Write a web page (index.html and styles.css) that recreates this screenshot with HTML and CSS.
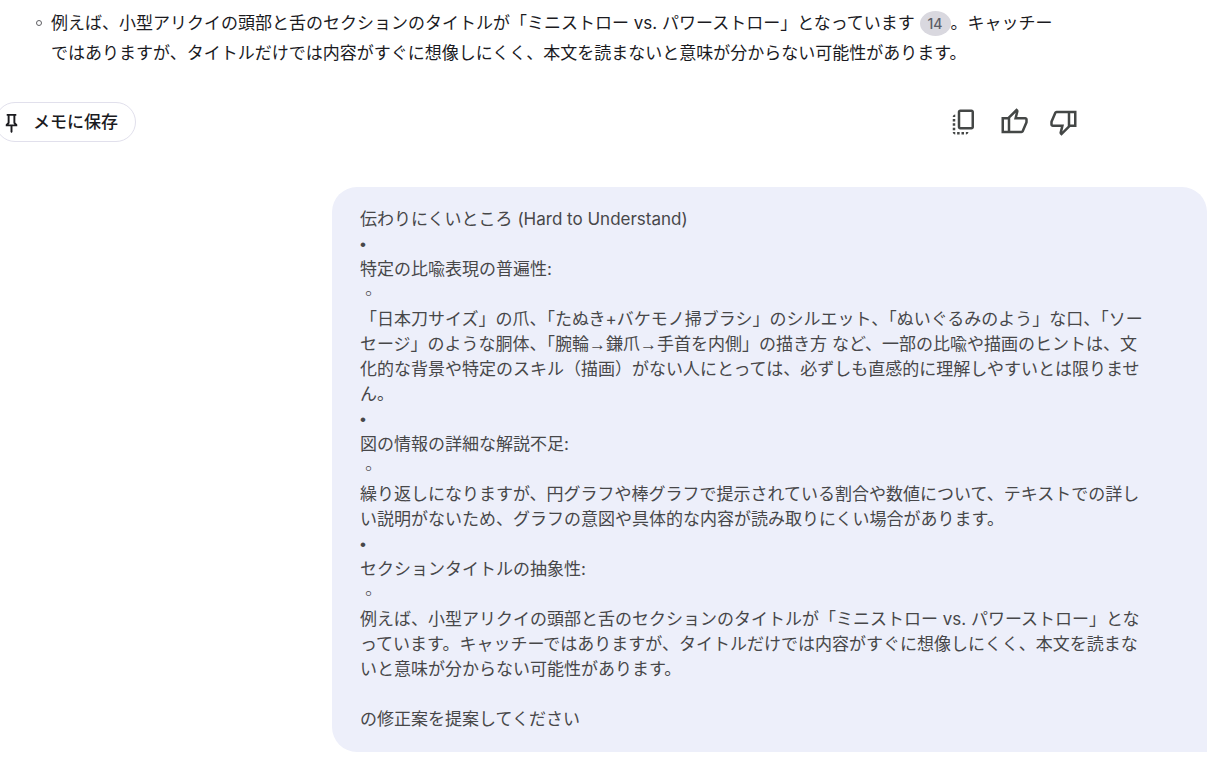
FILE: index.html
```html
<!DOCTYPE html>
<html lang="ja">

<head>
  <meta charset="utf-8">
  <meta name="viewport" content="width=device-width, initial-scale=1">
  <title>チャット</title>
  <link rel="stylesheet" href="styles.css">
</head>

<body>
  <main class="chat">
    <section class="reply">
      <ul class="reply-list">
        <li>例えば、小型アリクイの頭部と舌のセクションのタイトルが「ミニストロー vs. パワーストロー」となっています <button class="citation" type="button">14</button>。キャッチー<br>ではありますが、タイトルだけでは内容がすぐに想像しにくく、本文を読まないと意味が分からない可能性があります。</li>
      </ul>

      <div class="actions">
        <button class="save" type="button">
          <svg class="pin" viewBox="0 -960 960 960" aria-hidden="true"><path d="m640-480 80 80v80H520v240l-40 40-40-40v-240H240v-80l80-80v-280h-40v-80h400v80h-40v280Zm-286 80h252l-46-46v-314H400v314l-46 46Z"/></svg>
          <span class="save-label">メモに保存</span>
        </button>

        <div class="feedback">
          <button class="icon-button" type="button" aria-label="コピー">
            <svg viewBox="0 0 24 24"><path d="M18 2H9c-1.1 0-2 .9-2 2v12c0 1.1.9 2 2 2h9c1.1 0 2-.9 2-2V4c0-1.1-.9-2-2-2zm0 14H9V4h9v12zM3 15v-2h2v2H3zm0-5.500h2v2H3v-2zM10 20h2v2h-2v-2zm-7-1.500v-2h2v2H3zM5 22c-1.100 0-2-.9-2-2h2v2zm3.500 0h-2v-2h2v2zm5 0v-2h2c0 1.100-.9 2-2 2zM5 6v2H3c0-1.100.9-2 2-2z"/></svg>
          </button>
          <button class="icon-button" type="button" aria-label="良い回答">
            <svg viewBox="0 -960 960 960"><path d="M720-120H280v-520l280-280 50 50q7 7 11.500 19t4.500 23v14l-44 174h258q32 0 56 24t24 56v80q0 7-2 15t-4 15L794-168q-9 20-30 34t-44 14Zm-360-80h360l120-280v-80H480l54-220-174 174v406ZM280-640v80H160v360h120v80H80v-520h200Z"/></svg>
          </button>
          <button class="icon-button" type="button" aria-label="悪い回答">
            <svg viewBox="0 -960 960 960"><path d="M240-840h440v520L400-40l-50-50q-7-7-11.500-19t-4.500-23v-14l44-174H120q-32 0-56-24t-24-56v-80q0-7 2-15t4-15l120-282q9-20 30-34t44-14Zm360 80H240L120-480v80h360l-54 220 174-174v-406ZM680-320v-80h120v-360H680v-80h200v520H680Z"/></svg>
          </button>
        </div>
      </div>
    </section>

    <section class="message">
      <p>伝わりにくいところ (Hard to Understand)</p>
      <p><span class="symbol">•</span></p>
      <p>特定の比喩表現の普遍性:</p>
      <p><span class="circle">◦</span></p>
      <p>「日本刀サイズ」の爪、「たぬき+バケモノ掃ブラシ」のシルエット、「ぬいぐるみのよう」な口、「ソー<br>セージ」のような胴体、「腕輪<span class="symbol">→</span>鎌爪<span class="symbol">→</span>手首を内側」の描き方 など、一部の比喩や描画のヒントは、文<br>化的な背景や特定のスキル（描画）がない人にとっては、必ずしも直感的に理解しやすいとは限りませ<br>ん。</p>
      <p><span class="symbol">•</span></p>
      <p>図の情報の詳細な解説不足:</p>
      <p><span class="circle">◦</span></p>
      <p>繰り返しになりますが、円グラフや棒グラフで提示されている割合や数値について、テキストでの詳し<br>い説明がないため、グラフの意図や具体的な内容が読み取りにくい場合があります。</p>
      <p><span class="symbol">•</span></p>
      <p>セクションタイトルの抽象性:</p>
      <p><span class="circle">◦</span></p>
      <p>例えば、小型アリクイの頭部と舌のセクションのタイトルが「ミニストロー vs. パワーストロー」とな<br>っています。キャッチーではありますが、タイトルだけでは内容がすぐに想像しにくく、本文を読まな<br>いと意味が分からない可能性があります。</p>
      <p class="request">の修正案を提案してください</p>
    </section>
  </main>
</body>

</html>
```

FILE: styles.css
```css
body {
  margin: 0;
  background: #fff;
  color: #1b1b1f;
  font-family: Inter, "Noto Sans CJK JP", sans-serif;
  font-size: 17px;
  overflow-x: hidden;
}

button {
  border: 0;
  background: none;
  color: inherit;
  font-family: inherit;
  cursor: pointer;
}

.chat {
  padding: 8px 7px 32px 0;
}

.reply {
  margin-right: 128px;
}

.reply-list {
  margin: 0;
  padding-left: 51px;
  line-height: 30px;
  list-style: none;
}

.reply-list li {
  position: relative;
}

/* small hollow bullet hanging left of the text */
.reply-list li::before {
  content: "";
  position: absolute;
  top: 12px;
  left: -15px;
  width: 4px;
  height: 4px;
  border: 1px solid #5f5f64;
  border-radius: 50%;
}

.citation {
  width: 31px;
  height: 25px;
  padding: 0;
  border-radius: 50%;
  background: #d9d8df;
  color: #5d5e67;
  font-size: 14px;
  font-weight: 500;
  line-height: 25px;
}

.actions {
  display: flex;
  justify-content: space-between;
  align-items: center;
  margin-top: 34px;
}

.save {
  display: flex;
  align-items: center;
  gap: 10px;
  height: 40px;
  margin-left: -5px;
  padding: 0 17px 0 4px;
  border: 1px solid #e1e0ec;
  border-radius: 20px;
  font-size: 17px;
  font-weight: 500;
}

.save-label {
  padding-bottom: 3px;
}

.pin {
  width: 23px;
  height: 23px;
  fill: currentColor;
}

.feedback {
  display: flex;
  gap: 20px;
}

.icon-button {
  padding: 0;
  width: 30px;
  height: 30px;
}

.icon-button svg {
  display: block;
  width: 30px;
  height: 30px;
  fill: #444746;
}

.message {
  box-sizing: border-box;
  width: 72.5%;
  margin-top: 45px;
  margin-left: auto;
  padding: 20px 28px;
  border-radius: 25px 25px 0 25px;
  background: #edeffa;
  color: #474749;
  line-height: 25px;
}

.message p {
  margin: 0;
}

/* line-height 0 keeps the other font from stretching the line */
.symbol {
  font-family: "Liberation Sans", sans-serif;
  line-height: 0;
}

.circle {
  font-family: "Noto Sans CJK JP", sans-serif;
  line-height: 0;
}

.message .request {
  margin-top: 25px;
}
```
